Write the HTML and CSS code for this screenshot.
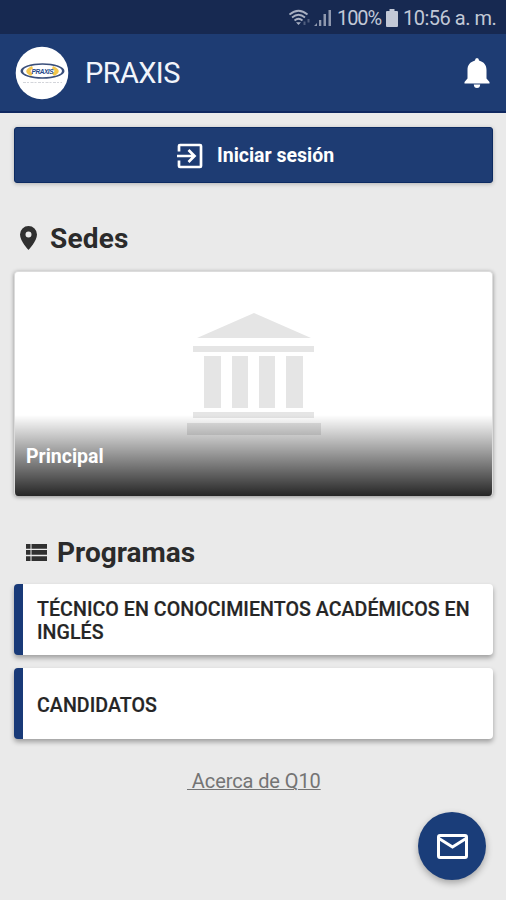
FILE: index.html
```html
<!DOCTYPE html>
<html lang="es">
<head>
<meta charset="utf-8">
<meta name="viewport" content="width=device-width">
<title>PRAXIS</title>
<link rel="stylesheet" href="styles.css">
</head>
<body>
<div class="status">
  <svg class="wifi" width="22" height="18" viewBox="0 0 22 18" fill="none" stroke="currentColor" stroke-width="1.700"><path d="M.5 5.500Q9.500-2 18.500 5.500M3 8.500Q9.500 3 16 8.500M5.500 11.500Q9.500 8 13.500 11.500"/><path d="M7 13.200h5L9.500 16z" fill="currentColor" stroke="none"/><path d="M15.500 12.500v3.500M19.500 10v3.500" stroke-width="2" opacity=".4"/></svg>
  <svg class="signal" width="18" height="18" viewBox="0 0 18 18" fill="currentColor"><path d="M0 17h3v-3zM5 17h2.300v-6H5zM9.500 17h2.500V5H9.500zM14.500 17h2.500V1h-2.500z"/></svg>
  <span class="percent">100%</span>
  <svg class="battery" width="12" height="18" viewBox="0 0 12 18" fill="currentColor"><path d="M3.500 0h5v2H11q1 0 1 1v14q0 1-1 1H1q-1 0-1-1V3q0-1 1-1h2.500z"/></svg>
  <span class="time">10:56 a. m.</span>
</div>
<header class="appbar">
  <svg class="logo" width="54" height="54" viewBox="0 0 54 54">
    <circle cx="27" cy="27" r="26.300" fill="#fff"/>
    <ellipse cx="27.500" cy="25" rx="22" ry="7.800" fill="#3a4f7a"/>
    <ellipse cx="27.500" cy="25" rx="19.500" ry="6.200" fill="#fff"/>
    <path d="M17 20Q6 25 16 30L18 27.500Q13 25 18 22.500zM38 20Q49 25 39 30L37 27.500Q42 25 37 22.500z" fill="#f4c64c"/>
    <text class="logo-name" x="16.500" y="27.500" textLength="22">PRAXIS</text>
    <path d="M8 36.500h39" stroke="#d3d5da" stroke-width="1.200" stroke-dasharray="3 1 2 1.500"/>
  </svg>
  <h1 class="brand">PRAXIS</h1>
  <svg class="bell" width="26" height="30" viewBox="0 0 26 30" fill="#fff"><path d="M13 0q2 0 2 2.500C20 4 22.500 7 22.500 12v8.500L25.500 24v1.500H.5V24l3-3.500V12C3.500 7 6 4 11 2.500Q11 0 13 0zM9.800 26.500h6.400Q16 30 13 30t-3.200-3.500z"/></svg>
</header>
<main>
  <div class="login">
    <svg width="26" height="26" viewBox="0 0 26 26" fill="none" stroke="#fff" stroke-width="2.700"><path d="M2 8.500V3q0-1 1-1h20q1 0 1 1v20q0 1-1 1H3q-1 0-1-1v-5.500M0 13h17M11.500 7l6 6-6 6"/></svg>
    <span>Iniciar sesión</span>
  </div>
  <h2 class="heading sedes">
    <svg width="17" height="24" viewBox="0 0 17 24" fill="#303030"><path fill-rule="evenodd" d="M8.500 0A8.500 8.500 0 0 0 0 8.500C0 15 8.500 24 8.500 24S17 15 17 8.500A8.500 8.500 0 0 0 8.500 0zm0 5.500a3 3 0 1 1 0 6 3 3 0 0 1 0-6z"/></svg>
    <span>Sedes</span>
  </h2>
  <section class="campus">
    <svg class="building" width="134" height="122" viewBox="0 0 134 122" fill="#e5e5e5"><path d="M67 0 124 25H10zM6 33h121v6H6zM17 43h17v52H17zM45 43h16v52H45zM72 43h16v52H72zM99 43h17v52H99zM6 99h121v6H6zM0 110h134v12H0z"/></svg>
    <div class="caption">Principal</div>
  </section>
  <h2 class="heading programs">
    <svg width="21" height="17" viewBox="0 0 21 17" fill="#303030"><path d="M0 0h4.500v4.700H0zM5.500 0H21v4.700H5.500zM0 6.100h4.500v4.700H0zM5.500 6.100H21v4.700H5.500zM0 12.300h4.500V17H0zM5.500 12.300H21V17H5.500z"/></svg>
    <span>Programas</span>
  </h2>
  <div class="program"><span>TÉCNICO EN CONOCIMIENTOS ACADÉMICOS EN INGLÉS</span></div>
  <div class="program"><span>CANDIDATOS</span></div>
  <div class="about">&nbsp;Acerca de Q10</div>
</main>
<div class="fab">
  <svg width="31" height="25" viewBox="0 0 31 25" fill="none" stroke="#fff" stroke-width="3"><rect x="1.500" y="1.500" width="28" height="22" rx="1.500"/><path d="M2 4.500l13.500 8.500L29 4.500"/></svg>
</div>
</body>
</html>
```
FILE: styles.css
```css
* { box-sizing: border-box; }
body {
  margin: 0;
  height: 900px;
  overflow: hidden;
  background: #eaeaea;
  font-family: Roboto, "Liberation Sans", sans-serif;
  color: #252525;
}
svg { display: block; flex: none; }
.status {
  height: 34px;
  background: #172951;
  color: #c2c8d6;
  display: flex;
  align-items: center;
  padding: 2px 0 0 289px;
  font-size: 20px;
  white-space: nowrap;
}
.wifi { opacity: .85; }
.signal { margin-left: 3px; opacity: .7; }
.percent { width: 44px; margin-left: 5px; letter-spacing: -1.1px; }
.battery { margin-left: 5px; }
.time { margin-left: 5px; letter-spacing: -.5px; }
.appbar {
  height: 79px;
  background: #1e3c73;
  border-bottom: 2px solid #0f2860;
  display: flex;
  align-items: center;
  padding: 0 16px 0 15px;
}
.logo { margin-top: 1px; }
.logo-name { font: italic bold 6.500px "Liberation Sans", sans-serif; fill: #23488a; }
.brand {
  flex: 1;
  margin: 0 0 0 16px;
  font-size: 29px;
  font-weight: 400;
  letter-spacing: -.6px;
  color: #f2f5fb;
}
main { padding: 14px 13px 0 14px; }
.login {
  height: 56px;
  border: 1px solid #0d2b62;
  border-radius: 3px;
  background: #1e3c73;
  box-shadow: 0 1px 4px rgba(0, 0, 0, .25);
  display: flex;
  align-items: center;
  padding: 1px 0 0 162px;
  gap: 14px;
  color: #fff;
  font-size: 19.5px;
  font-weight: 700;
}
.heading {
  margin: 0;
  height: 32px;
  display: flex;
  align-items: center;
  font-size: 28px;
  line-height: 32px;
  font-weight: 700;
  color: #2b2b2b;
}
.heading svg { margin-bottom: 2px; }
.sedes { margin-top: 40px; padding-left: 6px; gap: 13px; letter-spacing: .2px; }
.campus {
  height: 225px;
  margin: 16px 0 0;
  border: 1px solid #dcdcdc;
  border-width: 1px 1px 0;
  border-radius: 4px;
  background: #fff;
  box-shadow: 0 1px 4px rgba(0, 0, 0, .4);
  display: grid;
  overflow: hidden;
}
.building { grid-area: 1 / 1; margin: 41px 0 0 172px; }
.caption {
  grid-area: 1 / 1;
  align-self: end;
  height: 81px;
  padding: 30px 0 0 11px;
  background: linear-gradient(rgba(0, 0, 0, 0), rgba(0, 0, 0, .85));
  color: #fff;
  font-size: 19.5px;
  line-height: 24px;
  font-weight: 700;
}
.programs { margin-top: 41px; padding-left: 12px; gap: 10px; }
.program {
  height: 71px;
  margin-top: 15px;
  border-left: 9px solid #193a78;
  border-radius: 4px;
  background: #fff;
  box-shadow: 0 3px 5px rgba(0, 0, 0, .32);
  display: flex;
  align-items: center;
  padding: 3px 15px 0 14px;
  font-size: 19.6px;
  line-height: 23px;
  letter-spacing: .05px;
  font-weight: 500;
  -webkit-text-stroke: .2px #252525;
}
.program + .program { margin-top: 13px; }
.about {
  width: max-content;
  margin: 30px 0 0 173px;
  font-size: 20px;
  line-height: 24px;
  letter-spacing: -.1px;
  color: #747474;
  text-decoration: underline;
  text-decoration-thickness: 1px;
}
.fab {
  position: absolute;
  left: 418px;
  top: 812px;
  width: 68px;
  height: 68px;
  border-radius: 50%;
  background: #1a3d79;
  box-shadow: 0 3px 7px rgba(0, 0, 0, .3);
  display: grid;
  place-items: center;
}
```
